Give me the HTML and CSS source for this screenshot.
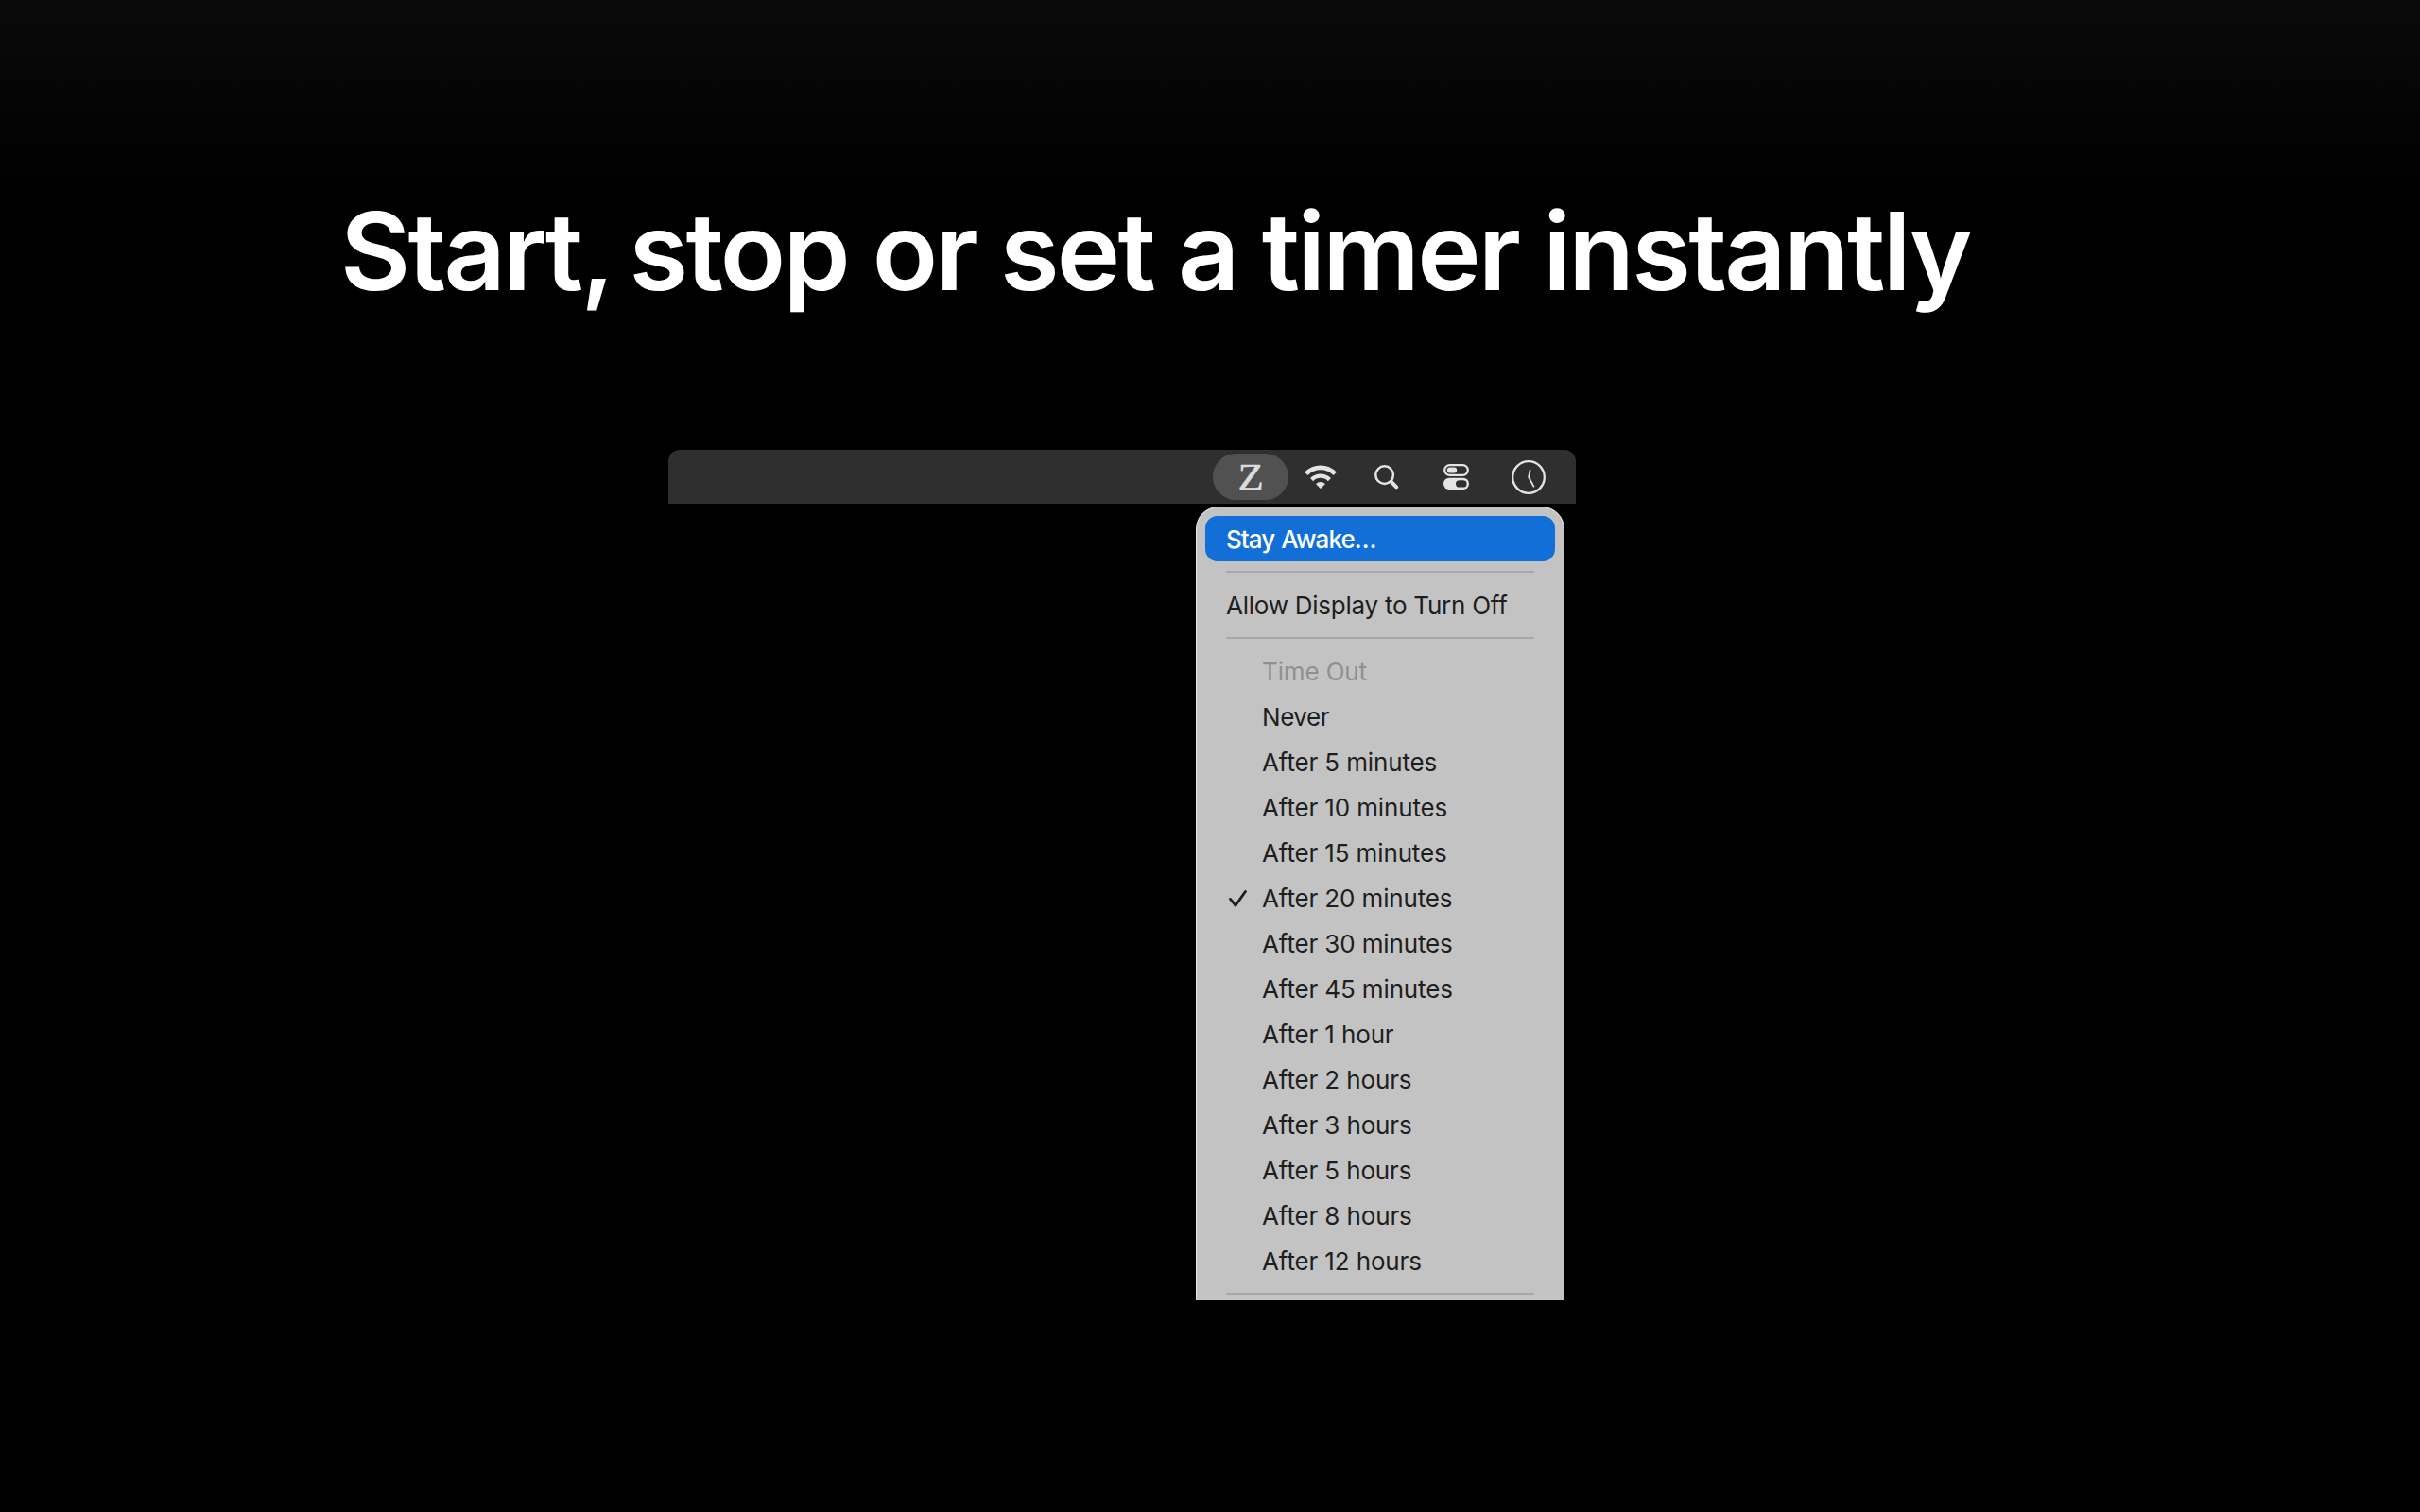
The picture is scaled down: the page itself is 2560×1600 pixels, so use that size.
FILE: index.html
```
<!DOCTYPE html>
<html lang="en">
<head>
    <meta charset="UTF-8">
    <meta name="viewport" content="width=device-width, initial-scale=1.0">
    <title>Stay Awake</title>
    <link rel="stylesheet" href="styles.css">
</head>
<body>
    <h1>Start<span class="comma">,</span> stop or set a timer instantly</h1>

    <div class="menu-bar">
        <div class="status-item"><span>Z</span></div>
        <svg class="wifi" width="34" height="25" viewBox="0 0 34 25" fill="none" stroke="#e4e4e4">
            <path d="M1.8 9.4A21 21 0 0 1 32.2 9.4" stroke-width="4.6"/>
            <path d="M7.6 15.6A13.2 13.2 0 0 1 26.4 15.6" stroke-width="4.4"/>
            <path d="M12 20A7.5 7.5 0 0 1 22 20L17.7 24.5Q17 25.2 16.3 24.5Z" fill="#e4e4e4" stroke="none"/>
        </svg>
        <svg class="search" width="26" height="26" viewBox="0 0 26 26" fill="none" stroke="#e4e4e4" stroke-linecap="round">
            <circle cx="10.6" cy="10.6" r="9.3" stroke-width="2.5"/>
            <path d="M17.6 17.6L23.2 23.4" stroke-width="4"/>
        </svg>
        <svg class="control" width="27" height="27" viewBox="0 0 27 27" fill="none">
            <rect x="1.2" y="1.2" width="24.6" height="10.6" rx="5.3" stroke="#e4e4e4" stroke-width="2.3"/>
            <rect x="3.8" y="3.6" width="10.4" height="6" rx="3" fill="#e4e4e4"/>
            <rect x="0" y="14.8" width="27" height="12.2" rx="6.1" fill="#e4e4e4"/>
            <rect x="13" y="17.2" width="11.6" height="7.4" rx="3.7" fill="#2f2f2f"/>
        </svg>
        <svg class="clock" width="36" height="36" viewBox="0 0 36 36" fill="none" stroke="#e4e4e4" stroke-linecap="round" stroke-linejoin="round">
            <circle cx="18" cy="18" r="16.8" stroke-width="2.3"/>
            <path d="M19.6 10.6L18.2 18L23.4 27.6" stroke-width="1.8"/>
        </svg>
    </div>

    <div class="menu">
        <div class="item active">Stay Awake…</div>
        <hr>
        <div class="item display">Allow Display to Turn Off</div>
        <hr>
        <div class="item indent disabled">Time Out</div>
        <div class="item indent never">Never</div>
        <div class="item indent">After 5 minutes</div>
        <div class="item indent">After 10 minutes</div>
        <div class="item indent">After 15 minutes</div>
        <div class="item checked">
            <svg width="19" height="18" viewBox="0 0 19 18" fill="none" stroke="#1e1e1e" stroke-width="2.8" stroke-linecap="round" stroke-linejoin="round">
                <path d="M1.5 9.4L7 16.2L17.4 1.5"/>
            </svg>
            After 20 minutes
        </div>
        <div class="item indent">After 30 minutes</div>
        <div class="item indent">After 45 minutes</div>
        <div class="item indent">After 1 hour</div>
        <div class="item indent">After 2 hours</div>
        <div class="item indent">After 3 hours</div>
        <div class="item indent">After 5 hours</div>
        <div class="item indent">After 8 hours</div>
        <div class="item indent">After 12 hours</div>
        <hr>
    </div>
</body>
</html>
```
FILE: styles.css
```
/* General Styling */
body {
    font-family: Inter, 'Liberation Sans', sans-serif;
    background: linear-gradient(to bottom, #0a0a0a 0, #060606 80px, #000 210px) no-repeat #000;
    color: #fff;
    margin: 0;
    padding-top: 196px;
    min-height: 1600px;
    box-sizing: border-box;
}

h1 {
    margin: 0 0 140px 360px;
    font-size: 114px;
    font-weight: 600;
    line-height: 140px;
    letter-spacing: -2.75px;
    white-space: nowrap;
}

.comma {
    letter-spacing: -11px;
}

/* Menu bar */
.menu-bar {
    display: flex;
    align-items: center;
    justify-content: flex-end;
    width: 960px;
    height: 57px;
    margin-left: 707px;
    padding-right: 32px;
    box-sizing: border-box;
    background: #2f2f2f;
    border-radius: 12px 12px 0 0;
}

.status-item {
    width: 80px;
    height: 49px;
    border-radius: 25px;
    background: #515151;
    color: #dcdcdc;
    font-family: 'Liberation Serif', serif;
    font-size: 40px;
    line-height: 49px;
    text-align: center;
}

.status-item span {
    display: inline-block;
    transform: scaleX(1.12);
    -webkit-text-stroke: 0.4px #dcdcdc;
}

.wifi {
    margin-left: 17px;
}

.search {
    margin-left: 40px;
}

.control {
    margin-left: 47px;
}

.clock {
    margin-left: 45px;
}

/* Dropdown */
.menu {
    width: 390px;
    height: 840px;
    margin: 3px 0 0 1265px;
    padding: 9px 9px 0;
    box-sizing: border-box;
    overflow: hidden;
    background: #c3c3c3;
    border: 1px solid #e6e6e6;
    border-bottom: none;
    border-radius: 24px 24px 0 0;
}

.item {
    display: flex;
    align-items: center;
    height: 48px;
    padding: 1px 0 0 22px;
    box-sizing: border-box;
    color: #1e1e1e;
    font-size: 26px;
    letter-spacing: -0.14px;
    white-space: nowrap;
}

.item.active {
    background: #126fd8;
    border-radius: 13px;
    color: #fff;
    font-weight: 500;
    letter-spacing: -0.95px;
    word-spacing: 1px;
}

.item.display {
    letter-spacing: -0.25px;
}

.item.never {
    letter-spacing: -0.45px;
}

.item.indent {
    padding-left: 60px;
}

.item.disabled {
    color: #909090;
}

.item.checked {
    gap: 16px;
    padding-left: 25px;
}

.menu hr {
    height: 2px;
    margin: 10px 22px;
    border: none;
    background: #a9a9a9;
}
```
